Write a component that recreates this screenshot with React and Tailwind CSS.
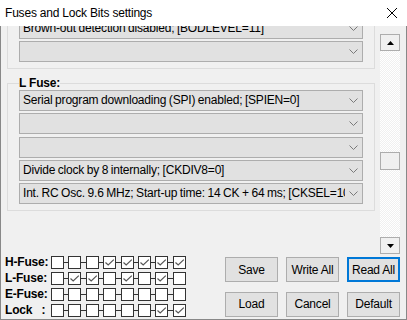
import React from 'react';

const H_BITS = [0, 0, 0, 1, 1, 1, 1, 1];
const L_BITS = [0, 1, 1, 0, 1, 0, 1, 0];
const E_BITS = [0, 0, 0, 0, 0, 0, 0, 0];
const LOCK_BITS = [0, 0, 0, 0, 0, 0, 1, 1];

const Chevron = () => (
  <svg width="9" height="5" viewBox="0 0 9 5" className="shrink-0">
    <path d="M0.5 0.5 L4.5 4.5 L8.5 0.5" fill="none" stroke="#7a7a7a" strokeWidth="1" />
  </svg>
);

const Combo = ({ text }) => (
  <div className="h-[21px] w-full flex items-center bg-[#e1e1e1] border border-[#adadad]">
    <div className="flex-1 min-w-0 overflow-hidden whitespace-nowrap pl-[3px] leading-[19px] [word-spacing:-0.5px]">
      {text}
    </div>
    <div className="w-[17px] shrink-0 flex items-center justify-center">
      <Chevron />
    </div>
  </div>
);

const GroupBox = ({ label, items, className = '' }) => (
  <fieldset className={`min-w-0 w-full border border-[#dcdcdc] px-[11px] pb-[6px] ${className}`}>
    <legend className="font-bold leading-[14px]">{label}</legend>
    <div className="flex flex-col gap-[2.25px]">
      {items.map((t, i) => (
        <Combo key={i} text={t} />
      ))}
    </div>
  </fieldset>
);

const Check = ({ on }) => (
  <div className="w-[13px] h-[13px] border border-[#333] bg-white flex items-center justify-center shrink-0">
    {on ? (
      <svg width="11" height="11" viewBox="0 0 11 11">
        <path d="M1.5 5.5 L4.2 8 L9.8 2.6" fill="none" stroke="#555" strokeWidth="1.2" />
      </svg>
    ) : null}
  </div>
);

const BitRow = ({ label, bits }) => (
  <div className="flex items-center h-[13px]">
    <div className="w-[46px] font-bold leading-[13px] whitespace-pre">{label}</div>
    {bits.map((b, i) => (
      <React.Fragment key={i}>
        {i > 0 && <div className="w-[4.4px] h-px bg-[#333] shrink-0" />}
        <Check on={b} />
      </React.Fragment>
    ))}
  </div>
);

const Btn = ({ children, active }) => (
  <button
    className={`w-[53px] h-[25px] bg-[#e1e1e1] flex items-center justify-center ${
      active ? 'border-2 border-[#0078d7]' : 'border border-[#adadad]'
    }`}
  >
    {children}
  </button>
);

const ScrollBtn = ({ down }) => (
  <div className="h-[17px] border border-[#adadad] bg-[#f0f0f0] flex items-center justify-center">
    <svg width="7" height="4" viewBox="0 0 7 4">
      <path d={down ? 'M0 0 H7 L3.5 4 Z' : 'M0 4 H7 L3.5 0 Z'} fill="#000" />
    </svg>
  </div>
);

export default function App() {
  return (
    <div
      className="w-[407px] h-[320px] flex flex-col bg-[#f0f0f0] text-[12px] tracking-[-0.2px] text-black overflow-hidden"
      style={{ fontFamily: '"Liberation Sans", Arial, sans-serif' }}
    >
      {/* Title bar */}
      <div className="h-[26px] shrink-0 bg-white flex items-center justify-between pl-[5px] pr-[10px]">
        <span className="leading-[16px]">Fuses and Lock Bits settings</span>
        <svg width="10" height="10" viewBox="0 0 10 10">
          <path d="M0 0 L10 10 M10 0 L0 10" stroke="#000" strokeWidth="1" />
        </svg>
      </div>

      <div className="flex-1 flex flex-col border-x border-b border-[#888]">
        {/* Scrolling fuse area */}
        <div className="flex h-[228px] shrink-0">
          <div className="w-[379px] overflow-hidden">
            <div className="pl-[6px] w-[374px] mt-[-45.5px]">
              <GroupBox
                label="H Fuse:"
                items={['', 'Brown-out detection disabled; [BODLEVEL=11]', '']}
              />
              <GroupBox
                className="mt-[7px]"
                label="L Fuse:"
                items={[
                  'Serial program downloading (SPI) enabled; [SPIEN=0]',
                  '',
                  '',
                  'Divide clock by 8 internally; [CKDIV8=0]',
                  'Int. RC Osc. 9.6 MHz; Start-up time: 14 CK + 64 ms; [CKSEL=10 SUT=10]',
                ]}
              />
            </div>
          </div>
          <div className="w-[20px] pt-[8px] flex flex-col">
            <ScrollBtn />
            <div className="flex-1 pt-[101px] bg-[repeating-conic-gradient(#ffffff_0%_25%,#f0f0f0_0%_50%)] bg-[length:2px_2px]">
              <div className="h-[18px] border border-[#adadad] bg-[#f0f0f0]" />
            </div>
            <ScrollBtn down />
          </div>
        </div>

        {/* Bits and buttons */}
        <div className="flex justify-between pl-[4px] pr-[6px]">
          <div className="flex flex-col gap-[3px] pt-[2px]">
            <BitRow label="H-Fuse:" bits={H_BITS} />
            <BitRow label="L-Fuse:" bits={L_BITS} />
            <BitRow label="E-Fuse:" bits={E_BITS} />
            <BitRow label={'Lock   :'} bits={LOCK_BITS} />
          </div>
          <div className="grid grid-cols-3 gap-x-[8px] gap-y-[9px] pt-[3px]">
            <Btn>Save</Btn>
            <Btn>Write All</Btn>
            <Btn active>Read All</Btn>
            <Btn>Load</Btn>
            <Btn>Cancel</Btn>
            <Btn>Default</Btn>
          </div>
        </div>
      </div>
    </div>
  );
}
